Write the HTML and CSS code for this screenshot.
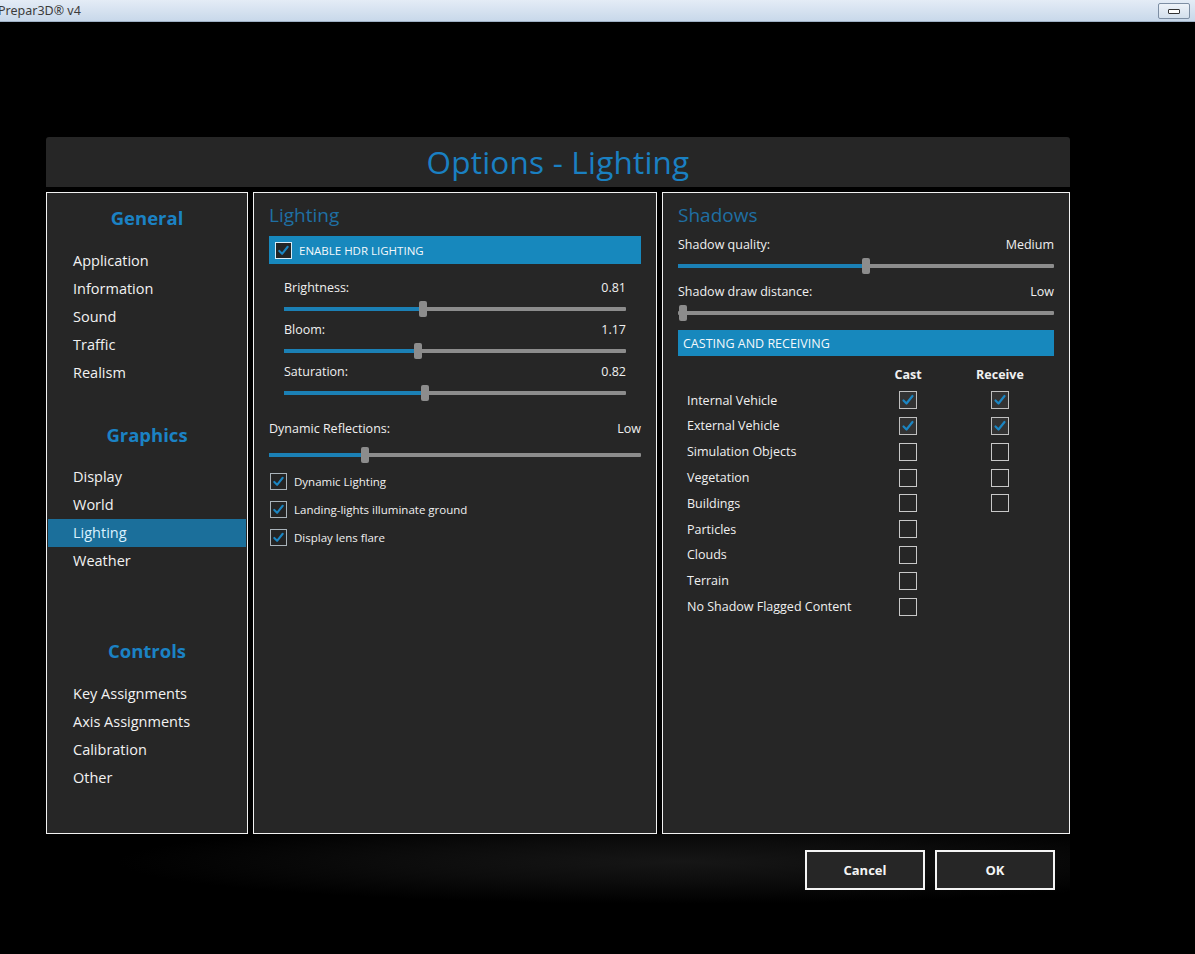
FILE: index.html
```html
<!DOCTYPE html>
<html>
<head>
<meta charset="utf-8">
<link rel="stylesheet" href="styles.css">
</head>
<body>
<div class="titlebar">
  <span class="app-title">Prepar3D® v4</span>
  <div class="win-btn"><span class="min-bar"></span></div>
</div>
<div class="stage">
  <div class="dialog">
    <div class="header">Options - Lighting</div>
    <div class="panels">
      <div class="panel nav">
        <div class="nav-head">General</div>
        <ul class="nav-list">
          <li>Application</li>
          <li>Information</li>
          <li>Sound</li>
          <li>Traffic</li>
          <li>Realism</li>
        </ul>
        <div class="nav-head g2">Graphics</div>
        <ul class="nav-list">
          <li>Display</li>
          <li>World</li>
          <li class="active">Lighting</li>
          <li>Weather</li>
        </ul>
        <div class="nav-head g3">Controls</div>
        <ul class="nav-list">
          <li>Key Assignments</li>
          <li>Axis Assignments</li>
          <li>Calibration</li>
          <li>Other</li>
        </ul>
      </div>

      <div class="panel mid">
        <div class="sec-head">Lighting</div>
        <div class="bar hdr">
          <span class="cb cb-bar"><svg viewBox="0 0 16 16"><path d="M3.5 8.5 L6.5 11.5 L12.5 4" /></svg></span>
          <span>ENABLE HDR LIGHTING</span>
        </div>
        <div class="sub">
          <div class="slider">
            <div class="slabel"><span>Brightness:</span><span>0.81</span></div>
            <div class="track"><div class="fill" style="width:40.6%"></div><div class="thumb" style="left:40.6%"></div></div>
          </div>
          <div class="slider">
            <div class="slabel"><span>Bloom:</span><span>1.17</span></div>
            <div class="track"><div class="fill" style="width:39.1%"></div><div class="thumb" style="left:39.1%"></div></div>
          </div>
          <div class="slider">
            <div class="slabel"><span>Saturation:</span><span>0.82</span></div>
            <div class="track"><div class="fill" style="width:41.2%"></div><div class="thumb" style="left:41.2%"></div></div>
          </div>
        </div>
        <div class="slider refl">
          <div class="slabel"><span>Dynamic Reflections:</span><span>Low</span></div>
          <div class="track"><div class="fill" style="width:25.8%"></div><div class="thumb" style="left:25.8%"></div></div>
        </div>
        <div class="checks">
          <div class="check"><span class="cb on"><svg viewBox="0 0 16 16"><path d="M3.5 8.5 L6.5 11.5 L12.5 4" /></svg></span>Dynamic Lighting</div>
          <div class="check"><span class="cb on"><svg viewBox="0 0 16 16"><path d="M3.5 8.5 L6.5 11.5 L12.5 4" /></svg></span>Landing-lights illuminate ground</div>
          <div class="check"><span class="cb on"><svg viewBox="0 0 16 16"><path d="M3.5 8.5 L6.5 11.5 L12.5 4" /></svg></span>Display lens flare</div>
        </div>
      </div>

      <div class="panel right">
        <div class="sec-head">Shadows</div>
        <div class="rsliders">
          <div class="slider">
            <div class="slabel"><span>Shadow quality:</span><span>Medium</span></div>
            <div class="track"><div class="fill" style="width:50%"></div><div class="thumb" style="left:50%"></div></div>
          </div>
          <div class="slider">
            <div class="slabel"><span>Shadow draw distance:</span><span>Low</span></div>
            <div class="track"><div class="fill" style="width:0%"></div><div class="thumb" style="left:1.3%"></div></div>
          </div>
        </div>
        <div class="bar cast">CASTING AND RECEIVING</div>
        <div class="grid">
          <div class="gh"></div><div class="gh">Cast</div><div class="gh">Receive</div>
          <div class="gl">Internal Vehicle</div><div class="gc"><span class="box on"><svg viewBox="0 0 16 16"><path d="M3.5 8.5 L6.5 11.5 L12.5 4" /></svg></span></div><div class="gc"><span class="box on"><svg viewBox="0 0 16 16"><path d="M3.5 8.5 L6.5 11.5 L12.5 4" /></svg></span></div>
          <div class="gl">External Vehicle</div><div class="gc"><span class="box on"><svg viewBox="0 0 16 16"><path d="M3.5 8.5 L6.5 11.5 L12.5 4" /></svg></span></div><div class="gc"><span class="box on"><svg viewBox="0 0 16 16"><path d="M3.5 8.5 L6.5 11.5 L12.5 4" /></svg></span></div>
          <div class="gl">Simulation Objects</div><div class="gc"><span class="box"></span></div><div class="gc"><span class="box"></span></div>
          <div class="gl">Vegetation</div><div class="gc"><span class="box"></span></div><div class="gc"><span class="box"></span></div>
          <div class="gl">Buildings</div><div class="gc"><span class="box"></span></div><div class="gc"><span class="box"></span></div>
          <div class="gl">Particles</div><div class="gc"><span class="box"></span></div><div class="gc"></div>
          <div class="gl">Clouds</div><div class="gc"><span class="box"></span></div><div class="gc"></div>
          <div class="gl">Terrain</div><div class="gc"><span class="box"></span></div><div class="gc"></div>
          <div class="gl">No Shadow Flagged Content</div><div class="gc"><span class="box"></span></div><div class="gc"></div>
        </div>
      </div>
    </div>
    <div class="footer">
      <button class="btn">Cancel</button>
      <button class="btn">OK</button>
    </div>
  </div>
</div>
</body>
</html>
```

FILE: styles.css
```css
* { box-sizing: border-box; }
html, body { margin: 0; padding: 0; }
body {
  background: #000;
  width: 1195px;
  height: 954px;
  overflow: hidden;
  font-family: "Open Sans", "Noto Sans", sans-serif;
  color: #f0f0f0;
}
.titlebar {
  height: 22px;
  background: linear-gradient(#e4ecf6, #c8d8ea);
  border-bottom: 1px solid #9fb1c6;
  display: flex;
  align-items: center;
  justify-content: space-between;
  padding-right: 5px;
}
.app-title {
  font-family: "Noto Sans", sans-serif;
  font-size: 12.5px;
  color: #3c3c3c;
  margin-left: -2px;
}
.win-btn {
  width: 32px;
  height: 16px;
  border: 1px solid #7d8ea3;
  border-radius: 2px;
  background: linear-gradient(#eef3f9, #d3dfec);
  display: flex;
  align-items: center;
  justify-content: center;
}
.min-bar {
  width: 12px;
  height: 5px;
  border: 1px solid #333;
  background: #fff;
  border-radius: 1px;
  margin-top: 2px;
}
.stage {
  padding: 115px 0 0 46px;
}
.dialog {
  width: 1024px;
}
.header {
  height: 50px;
  background: #262626;
  border-radius: 3px 3px 0 0;
  color: #1a80c2;
  font-size: 31.5px;
  text-align: center;
  line-height: 50px;
  letter-spacing: 0.2px;
}
.panels {
  display: flex;
  gap: 5px;
  margin-top: 5px;
  height: 642px;
}
.panel {
  background: #262626;
  border: 1px solid #f2f2f2;
}
.nav { width: 202px; padding: 1px; }
.mid { width: 404px; padding: 10px 15px 0 15px; }
.right { width: 408px; padding: 10px 15px 0 15px; }

.nav-head {
  text-align: center;
  color: #1b82c4;
  font-weight: 700;
  font-size: 18.5px;
  line-height: 28px;
  margin-top: 10px;
}
.nav-head.g2 { margin-top: 34px; }
.nav-head.g3 { margin-top: 62px; }
.nav-list {
  list-style: none;
  margin: 14.5px 0 0 0;
  padding: 0;
}
.nav-list li {
  height: 28px;
  line-height: 28px;
  padding-left: 25px;
  font-size: 14.5px;
  color: #f2f2f2;
}
.nav-list li.active {
  background: #1b6f9b;
  color: #d9f1ff;
}

.sec-head {
  color: #1f6fa3;
  font-size: 19px;
  line-height: 24px;
}
.bar {
  background: #1788bd;
  color: #f4f8fb;
  display: flex;
  align-items: center;
}
.hdr {
  height: 28px;
  margin-top: 9px;
  padding-left: 6px;
  gap: 7px;
  font-size: 11.5px;
}
.cast {
  height: 26px;
  padding-left: 5px;
  margin-top: 15px;
  font-size: 12.5px;
}
.cb {
  width: 17px;
  height: 17px;
  border: 1px solid #c7d5df;
  background: #242424;
  display: inline-flex;
  flex: none;
}
.cb svg, .box svg {
  width: 100%;
  height: 100%;
}
.cb path, .box path {
  fill: none;
  stroke: #1b86c3;
  stroke-width: 2.2;
  stroke-linecap: round;
  stroke-linejoin: round;
}
.cb-bar { border-color: #d8ecf7; }

.sub {
  padding: 15px 15px 0 15px;
}
.slabel {
  display: flex;
  justify-content: space-between;
  font-size: 12.5px;
  line-height: 18px;
  color: #f0f0f0;
}
.track {
  position: relative;
  height: 4px;
  background: #8c8c8c;
  margin: 10px 0 10px 0;
  border-radius: 1px;
}
.fill {
  height: 4px;
  background: #1b80b5;
}
.thumb {
  position: absolute;
  top: -6px;
  width: 8px;
  height: 16px;
  margin-left: -4px;
  background: #8c8c8c;
  border-radius: 2px;
}
.refl { margin-top: 25px; }
.refl .track { margin-top: 15px; margin-bottom: 0; }

.checks { margin-top: 10px; }
.check {
  height: 28px;
  display: flex;
  align-items: center;
  gap: 7px;
  font-size: 11.5px;
  padding-left: 1px;
}
.cb.on { border-color: #a9b3ba; }

.rsliders { padding-top: 9px; }
.rsliders .track { margin-bottom: 15px; }
.rsliders .slider:last-child .track { margin-bottom: 0; }

.grid {
  display: grid;
  grid-template-columns: 185px 72px 112px;
  margin-top: 5.5px;
  padding-left: 9px;
}
.grid > div {
  height: 25.8px;
  display: flex;
  align-items: center;
  font-size: 12.5px;
}
.gh {
  font-weight: 700;
  justify-content: center;
}
.gc { justify-content: center; }
.box {
  width: 18px;
  height: 18px;
  border: 1px solid #c8c8c8;
  background: #262626;
  display: inline-flex;
}
.box.on { background: #333; border-color: #bfbfbf; }

.footer {
  height: 70px;
  display: flex;
  justify-content: flex-end;
  align-items: flex-start;
  gap: 10px;
  padding: 16px 15px 0 0;
  background: radial-gradient(ellipse 55% 60% at 62% 40%, #161616 0%, #0c0c0c 50%, rgba(0,0,0,0) 100%);
}
.btn {
  width: 120px;
  height: 40px;
  background: #262626;
  border: 2px solid #f4f4f4;
  color: #f4f4f4;
  font-family: "Open Sans", "Noto Sans", sans-serif;
  font-weight: 700;
  font-size: 13px;
  padding: 0;
}
```
